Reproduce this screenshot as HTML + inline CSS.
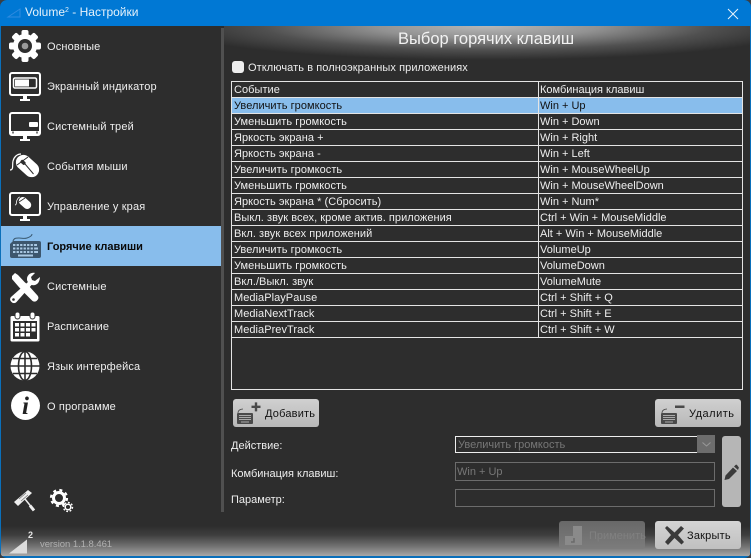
<!DOCTYPE html>
<html><head><meta charset="utf-8"><style>
html,body{margin:0;padding:0;background:#3a3f44;}
#w{position:relative;width:751px;height:558px;overflow:hidden;background:#2d2d2d;font:11px "Liberation Sans","DejaVu Sans",sans-serif;color:#e8e8e8;border-radius:7px;}
.a{position:absolute;white-space:nowrap;}
.m{position:absolute;left:47px;line-height:14px;color:#eee;font-size:11px;letter-spacing:.15px;white-space:nowrap;}
svg{position:absolute;overflow:visible;}
.r{position:absolute;left:232px;width:510px;height:15px;border-bottom:1px solid #e4e4e4;line-height:15px;color:#eee;}
.r span{position:absolute;left:2px;top:1px;white-space:nowrap;letter-spacing:.05px}
.r span+span{left:308px;letter-spacing:0}
.btn{position:absolute;background:linear-gradient(#d0d0d0,#b8b8b8);border-radius:3px;color:#111;}
.lbl{position:absolute;left:231px;color:#eee;line-height:14px;}
.inp{position:absolute;left:455px;width:258px;border:1px solid #6c6c6c;}
</style></head><body><div id="w">
<div class="a" style="left:0;top:0;width:751px;height:26px;background:#0078d4"></div>
<div class="a" style="left:0;top:26px;width:1px;height:532px;background:#0a6fba"></div>
<div class="a" style="left:750px;top:26px;width:1px;height:532px;background:#0a6fba"></div>

<svg style="left:7px;top:8px" width="14" height="10"><path d="M1 9 L13 1 V9 Z" fill="none" stroke="#2f8be0" stroke-width="1"/></svg>
<div class="a" style="left:25px;top:5px;font-size:12px;line-height:15px;color:#e6f2fb">Volume<sup style="font-size:7px;line-height:0;vertical-align:4px">2</sup> - Настройки</div>
<svg style="left:727px;top:8px" width="12" height="12"><path d="M1 1 L11 11 M11 1 L1 11" stroke="#e8f3fb" stroke-width="1"/></svg>

<!-- top glow -->
<div class="a" style="left:224px;top:26px;width:526px;height:34px;background:radial-gradient(ellipse 320px 34px at 50% 0,#b8b8b8 0,#929292 35%,#505050 70%,#2d2d2d 100%)"></div>
<!-- bottom gradient -->
<div class="a" style="left:1px;top:526px;width:749px;height:30px;background:linear-gradient(#2d2d2d 0,#3e3e3e 30%,#757575 70%,#a8a8a8 100%)"></div>
<div class="a" style="left:0;top:556px;width:751px;height:2px;background:#0a6fba"></div>

<!-- sidebar separator -->
<div class="a" style="left:221px;top:28px;width:3px;height:484px;background:#505050"></div>
<!-- selected -->
<div class="a" style="left:1px;top:226px;width:220px;height:40px;background:#88bdec"></div>

<!-- gear -->
<svg style="left:9px;top:30px" width="32" height="32" viewBox="0 0 32 32"><circle cx="16" cy="16" r="12" fill="#fff"/><g fill="#fff"><rect x="12.500" y="0" width="7" height="32" rx="2"/><rect x="12.500" y="0" width="7" height="32" rx="2" transform="rotate(45 16 16)"/><rect x="12.500" y="0" width="7" height="32" rx="2" transform="rotate(90 16 16)"/><rect x="12.500" y="0" width="7" height="32" rx="2" transform="rotate(135 16 16)"/></g><circle cx="16" cy="16" r="7" fill="#2d2d2d"/><circle cx="16" cy="16" r="3.300" fill="#999"/></svg>
<div class="m" style="top:40px">Основные</div>
<!-- monitor OSD -->
<svg style="left:9px;top:72px" width="32" height="30" viewBox="0 0 32 30"><rect x="1" y="1" width="30" height="22" rx="2" fill="none" stroke="#fff" stroke-width="2"/><rect x="4.500" y="6" width="23" height="10" rx="1.500" fill="none" stroke="#fff" stroke-width="1.500"/><rect x="6" y="7.500" width="14" height="7" fill="#fff"/><path d="M14 24h4v3h3v2H11v-2h3z" fill="#fff"/></svg>
<div class="m" style="top:80px">Экранный индикатор</div>
<!-- monitor tray -->
<svg style="left:9px;top:112px" width="32" height="30" viewBox="0 0 32 30"><rect x="1" y="1" width="30" height="22" rx="2" fill="none" stroke="#fff" stroke-width="2"/><rect x="20" y="10" width="9" height="5" rx="1" fill="#fff"/><rect x="2" y="19" width="28" height="3" fill="#fff"/><rect x="3" y="19.500" width="2" height="2" fill="#777"/><rect x="27" y="19.500" width="2" height="2" fill="#777"/><path d="M14 24h4v3h3v2H11v-2h3z" fill="#fff"/></svg>
<div class="m" style="top:120px">Системный трей</div>
<!-- mouse -->
<svg style="left:9px;top:152px" width="32" height="28" viewBox="0 0 32 28"><path d="M1 18c4 0 2-5 3-9s4-7 8-7" fill="none" stroke="#fff" stroke-width="1.200"/><rect x="11" y="1" width="15" height="26" rx="7.500" fill="#fff" transform="rotate(-48 18.500 14)"/><path d="M8 14l11-8M13.500 10l11 13" stroke="#2d2d2d" stroke-width="1" fill="none" transform="translate(0,-1)"/><rect x="12" y="7.500" width="3.500" height="5.500" rx="1.500" fill="#2d2d2d" transform="rotate(-48 14 10)"/></svg>
<div class="m" style="top:160px">События мыши</div>
<!-- monitor mouse -->
<svg style="left:9px;top:192px" width="32" height="30" viewBox="0 0 32 30"><rect x="1" y="1" width="30" height="22" rx="2" fill="none" stroke="#fff" stroke-width="2"/><path d="M6 13c2 0 1-3 2-5s2-3 3-3" fill="none" stroke="#fff" stroke-width=".8"/><rect x="12" y="4" width="8" height="14" rx="4" fill="#fff" transform="rotate(-48 16 11)"/><path d="M10 10l6-4" stroke="#2d2d2d" stroke-width=".8"/><path d="M14 24h4v3h3v2H11v-2h3z" fill="#fff"/></svg>
<div class="m" style="top:200px">Управление у края</div>
<!-- keyboard -->
<svg style="left:9px;top:232px" width="32" height="28" viewBox="0 0 32 28"><path d="M4 9c1-3 3-3 6-3s5 1 8 0 5-2 5-4" fill="none" stroke="#3a5a72" stroke-width="1"/><path d="M4 9h26a2 2 0 0 1 2 2v13a2 2 0 0 1-2 2H3a2 2 0 0 1-2-2V12z" fill="#3c566d"/><g fill="#a9c8e2"><path d="M4 12h24v2H4zM4 15.500h25v2H4zM4 19h25v2H4z"/><path d="M9 22.500h15v2H9z"/></g><g stroke="#3c566d" stroke-width="1.200"><path d="M7 12v9M10.500 12v9M14 12v9M17.500 12v9M21 12v9M24.500 12v9"/></g></svg>
<div class="m" style="top:240px;color:#0a0a0a;font-weight:bold;letter-spacing:0">Горячие клавиши</div>
<!-- tools -->
<svg style="left:9px;top:272px" width="32" height="32" viewBox="0 0 32 32"><path d="M3 4l3-3 3 2 6.500 7 4 3.500 9 10c1.500 2 1 3.500-.5 5s-3.500 1.500-5 0l-10-10-4-4.500-6-7z" fill="#fff"/><path d="M31 5l-5 4-3-1-1-3 4-4c-4-1-8 2-8 6 0 1 0 2 1 3L2 25c-1.500 2-1 3.500.5 5s3.500 1.500 5 0l15-17c4 1 8-1 8.500-8z" fill="#fff"/><circle cx="4.500" cy="27.500" r="1.300" fill="#2d2d2d"/></svg>
<div class="m" style="top:280px">Системные</div>
<!-- calendar -->
<svg style="left:10px;top:311px" width="30" height="31" viewBox="0 0 30 31"><path d="M2 5h26a1.500 1.500 0 0 1 1.500 1.500V29A1.500 1.500 0 0 1 28 30.500H2A1.500 1.500 0 0 1 .5 29V6.500A1.500 1.500 0 0 1 2 5z" fill="#fff"/><rect x="3" y="10" width="24" height="18" fill="#2d2d2d"/><rect x="5" y="1" width="5" height="7" rx="2.500" fill="#fff" stroke="#2d2d2d"/><rect x="20" y="1" width="5" height="7" rx="2.500" fill="#fff" stroke="#2d2d2d"/><g fill="#fff"><rect x="5" y="12" width="4" height="3.500"/><rect x="10.500" y="12" width="4" height="3.500"/><rect x="16" y="12" width="4" height="3.500"/><rect x="21.500" y="12" width="4" height="3.500"/><rect x="5" y="17" width="4" height="3.500"/><rect x="10.500" y="17" width="4" height="3.500"/><rect x="16" y="17" width="4" height="3.500"/><rect x="21.500" y="17" width="4" height="3.500"/><rect x="5" y="22" width="4" height="3.500"/><rect x="10.500" y="22" width="4" height="3.500"/><rect x="16" y="22" width="4" height="3.500"/></g></svg>
<div class="m" style="top:320px">Расписание</div>
<!-- globe -->
<svg style="left:10px;top:351px" width="30" height="30" viewBox="0 0 30 30"><circle cx="15" cy="15" r="14.500" fill="#fff"/><g fill="none" stroke="#2d2d2d" stroke-width="1.600"><ellipse cx="15" cy="15" rx="6.500" ry="14.500"/><path d="M15 0v30M0 15h30M3 7.500h24M3 22.500h24"/></g></svg>
<div class="m" style="top:360px">Язык интерфейса</div>
<!-- info -->
<svg style="left:11px;top:391px" width="29" height="29" viewBox="0 0 29 29"><circle cx="14.500" cy="14.500" r="14.500" fill="#fff"/><text x="14.500" y="23" text-anchor="middle" font-family="Liberation Serif,serif" font-style="italic" font-weight="bold" font-size="25" fill="#222">i</text></svg>
<div class="m" style="top:400px">О программе</div>

<!-- roller -->
<svg style="left:13px;top:489px" width="24" height="24" viewBox="0 0 24 24"><path d="M1 13L15 1l4 3L5 17z" fill="#eee"/><path d="M6 10l7-6M8 12l7-6" stroke="#777" stroke-width=".8"/><path d="M12 10l8 10" stroke="#eee" stroke-width="1.500"/><path d="M17 16.500l4 5" stroke="#eee" stroke-width="3"/></svg>
<!-- gears -->
<svg style="left:50px;top:489px" width="24" height="24" viewBox="0 0 24 24"><circle cx="9" cy="9" r="5.500" fill="none" stroke="#fff" stroke-width="3"/><circle cx="9" cy="9" r="8" fill="none" stroke="#fff" stroke-width="2.200" stroke-dasharray="3 3.300"/><circle cx="18" cy="18" r="2.800" fill="none" stroke="#fff" stroke-width="1.500"/><circle cx="18" cy="18" r="4.500" fill="none" stroke="#fff" stroke-width="1.400" stroke-dasharray="1.800 1.700"/></svg>

<!-- logo bottom -->
<svg style="left:9px;top:540px" width="19" height="14"><path d="M0 14 L18 0 V14 Z" fill="#dcdcdc" transform="translate(0,-.5)"/></svg>
<div class="a" style="left:28px;top:530px;font-size:9px;font-weight:bold;line-height:10px;color:#e6e6e6">2</div>
<div class="a" style="left:40px;top:539px;font-size:9.500px;line-height:12px;color:#b0b0b0;letter-spacing:-.05px;font-weight:normal">version 1.1.8.461</div>

<!-- heading -->
<div class="a" style="left:398px;top:29px;font-size:16.500px;line-height:20px;color:#f2f2f2">Выбор горячих клавиш</div>
<div class="a" style="left:232px;top:61px;width:12px;height:12px;background:#eee;border-radius:3px"></div>
<div class="a" style="left:248px;top:61px;line-height:14px;color:#eee;letter-spacing:.08px">Отключать в полноэкранных приложениях</div>

<!-- table -->
<div class="a" style="left:231px;top:81px;width:510px;height:307px;border:1px solid #e4e4e4"></div>
<div class="a" style="left:232px;top:97px;width:510px;height:16px;background:#88bdec"></div>
<div class="r" style="top:82px"><span>Событие</span><span>Комбинация клавиш</span></div>
<div class="r" style="top:98px;color:#111"><span>Увеличить громкость</span><span>Win + Up</span></div>
<div class="r" style="top:114px"><span>Уменьшить громкость</span><span>Win + Down</span></div>
<div class="r" style="top:130px"><span>Яркость экрана +</span><span>Win + Right</span></div>
<div class="r" style="top:146px"><span>Яркость экрана -</span><span>Win + Left</span></div>
<div class="r" style="top:162px"><span>Увеличить громкость</span><span>Win + MouseWheelUp</span></div>
<div class="r" style="top:178px"><span>Уменьшить громкость</span><span>Win + MouseWheelDown</span></div>
<div class="r" style="top:194px"><span>Яркость экрана * (Сбросить)</span><span>Win + Num*</span></div>
<div class="r" style="top:210px"><span>Выкл. звук всех, кроме актив. приложения</span><span>Ctrl + Win + MouseMiddle</span></div>
<div class="r" style="top:226px"><span>Вкл. звук всех приложений</span><span>Alt + Win + MouseMiddle</span></div>
<div class="r" style="top:242px"><span>Увеличить громкость</span><span>VolumeUp</span></div>
<div class="r" style="top:258px"><span>Уменьшить громкость</span><span>VolumeDown</span></div>
<div class="r" style="top:274px"><span>Вкл./Выкл. звук</span><span>VolumeMute</span></div>
<div class="r" style="top:290px"><span>MediaPlayPause</span><span>Ctrl + Shift + Q</span></div>
<div class="r" style="top:306px"><span>MediaNextTrack</span><span>Ctrl + Shift + E</span></div>
<div class="r" style="top:322px"><span>MediaPrevTrack</span><span>Ctrl + Shift + W</span></div>
<div class="a" style="left:538px;top:82px;width:1px;height:256px;background:#e4e4e4"></div>

<!-- add button -->
<div class="btn" style="left:233px;top:399px;width:86px;height:28px">
<svg style="left:3px;top:3px" width="28" height="24" viewBox="0 0 28 24"><path d="M2 11c0-3 3-4 5-4" fill="none" stroke="#444" stroke-width=".8"/><rect x="1" y="11" width="16" height="11" rx="1" fill="#4a4a4a"/><path d="M3 13h12v1H3zM3 15h12v1H3zM3 17h12v1H3zM5 19.500h8v1H5z" fill="#aaa"/><path d="M18.800 0h2.400v3.200h3.300v2.400h-3.300V9h-2.400V5.600h-3.300V3.200h3.300z" fill="#4a4a4a" transform="translate(0,.4)"/></svg>
<div class="a" style="left:32px;top:8px;line-height:14px;letter-spacing:.2px">Добавить</div></div>
<!-- delete button -->
<div class="btn" style="left:655px;top:399px;width:86px;height:28px">
<svg style="left:5px;top:3px" width="28" height="24" viewBox="0 0 28 24"><path d="M2 11c0-3 3-4 5-4" fill="none" stroke="#444" stroke-width=".8"/><rect x="1" y="11" width="16" height="11" rx="1" fill="#4a4a4a"/><path d="M3 13h12v1H3zM3 15h12v1H3zM3 17h12v1H3zM5 19.500h8v1H5z" fill="#aaa"/><rect x="15" y="3.500" width="9.500" height="2.500" fill="#4a4a4a"/></svg>
<div class="a" style="left:34px;top:8px;line-height:14px;letter-spacing:.5px">Удалить</div></div>

<!-- form -->
<div class="lbl" style="top:439px">Действие:</div>
<div class="lbl" style="top:467px">Комбинация клавиш:</div>
<div class="lbl" style="top:493px">Параметр:</div>
<div class="a" style="left:455px;top:436px;width:241px;height:15px;border:1px solid #eee;background:#2d2d2d;color:#777;line-height:16px;text-indent:2px">Увеличить громкость</div>
<div class="a" style="left:697px;top:435px;width:18px;height:18px;background:#6d6d6d"></div>
<svg style="left:702px;top:442px" width="9" height="5"><path d="M.5 .5L4.500 4 8.500 .5" fill="none" stroke="#999"/></svg>
<div class="inp" style="top:462px;height:17px;color:#777;line-height:18px;text-indent:1px">Win + Up</div>
<div class="inp" style="top:489px;height:16px"></div>
<div class="btn" style="left:722px;top:436px;width:19px;height:71px;background:#b6b6b6">
<svg style="left:2px;top:28px" width="15" height="17" viewBox="0 0 15 17"><path d="M.5 16L1.500 11.500 9 3.500 13 7 5 15z M10 2.500L11.500 1c.5-.5 1-.5 1.500 0l1.500 2c.5.5.5 1 0 1.500L14 6z" fill="#3a3a3a"/></svg></div>

<!-- apply -->
<div class="btn" style="left:559px;top:521px;width:86px;height:28px;background:linear-gradient(#686868,#7c7c7c);color:#808080">
<svg style="left:5px;top:3px" width="24" height="24" viewBox="0 0 24 24"><path d="M9 2h9v19H1v-9h8z" fill="#8a8a8a"/><path d="M10 14v4H7" fill="none" stroke="#6a6a6a" stroke-width="1.500"/></svg>
<div class="a" style="left:30px;top:8px;line-height:14px">Применить</div></div>
<!-- close -->
<div class="btn" style="left:655px;top:521px;width:86px;height:28px;background:linear-gradient(#d4d4d4,#c0c0c0)">
<svg style="left:10px;top:4px" width="19" height="20" viewBox="0 0 19 20"><path d="M2 1l7.500 6.500L16 1l3 2.500-6 6.500 6 7-2.500 2.500-7-6.500L3 20 0 17l6-7L0 3z" fill="#3a3a3a"/></svg>
<div class="a" style="left:32px;top:8px;line-height:14px;letter-spacing:.2px">Закрыть</div></div>
</div></body></html>
